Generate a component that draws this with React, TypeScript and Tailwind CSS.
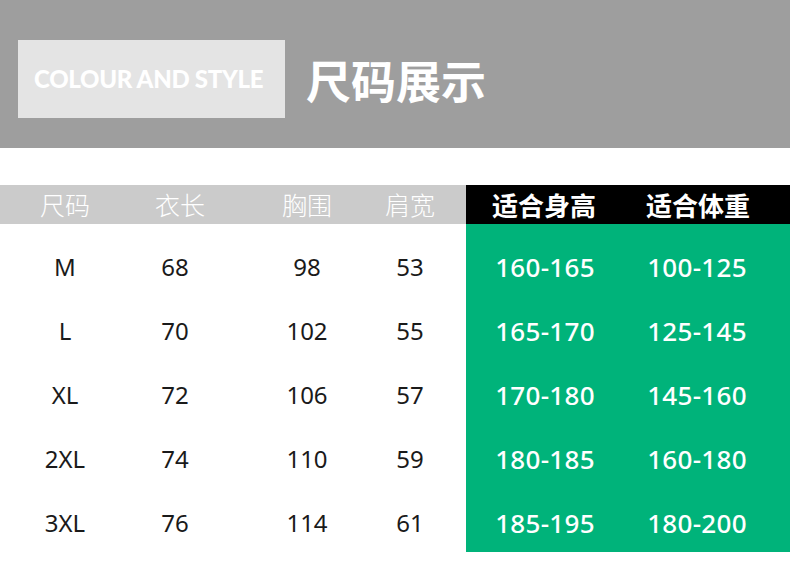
import React from "react";

const rows = [
  ["M", "68", "98", "53", "160-165", "100-125"],
  ["L", "70", "102", "55", "165-170", "125-145"],
  ["XL", "72", "106", "57", "170-180", "145-160"],
  ["2XL", "74", "110", "59", "180-185", "160-180"],
  ["3XL", "76", "114", "61", "185-195", "180-200"],
];

const leftCenters = [65, 175, 307, 410];
const rightCenters = [545, 697];

const font = { fontFamily: '"Noto Sans", "Noto Sans CJK SC", sans-serif' };

function Cell({ c, base, children, className }: { c: number; base: number; children: React.ReactNode; className: string }) {
  return (
    <div className={"absolute top-0 h-full flex items-center justify-center w-[160px] " + className} style={{ left: c - base - 80 }}>
      {children}
    </div>
  );
}

export default function App() {
  return (
    <div className="w-[790px] h-[573px] bg-white overflow-hidden font-['Noto_Sans','Noto_Sans_CJK_SC',sans-serif]">
      <div className="h-[148px] bg-[#9e9e9e] flex items-start pl-[18px] pt-[40px]">
        <div className="w-[267px] h-[78px] bg-[#e4e4e4] flex items-center pl-[16px]">
          <span className="text-white text-[24px] font-black tracking-[-0.3px] font-['Lato',sans-serif]">COLOUR AND STYLE</span>
        </div>
        <div className="ml-[21px] h-[78px] flex items-center text-white text-[45px] font-bold leading-none font-['Noto_Sans_CJK_SC',sans-serif]">尺码展示</div>
      </div>
      <div className="mt-[37px] flex">
        <div className="w-[466px]">
          <div className="h-[39px] bg-[#cbcbcb] relative text-white text-[25px] font-light font-['Noto_Sans_CJK_SC',sans-serif]">
            {["尺码", "衣长", "胸围", "肩宽"].map((t, i) => (
              <Cell key={t} c={[65, 180, 307, 410][i]} base={0} className="">{t}</Cell>
            ))}
          </div>
          <div className="pt-[11px]">
            {rows.map((r) => (
              <div key={r[0]} className="h-16 relative text-[24px] text-[#1a1a1a]" style={font}>
                {leftCenters.map((c, i) => (
                  <Cell key={i} c={c} base={0} className="">{r[i]}</Cell>
                ))}
              </div>
            ))}
          </div>
        </div>
        <div className="w-[324px]">
          <div className="h-[39px] bg-black relative text-white text-[26px] font-bold font-['Noto_Sans_CJK_SC',sans-serif]">
            {["适合身高", "适合体重"].map((t, i) => (
              <Cell key={t} c={[544, 698][i]} base={466} className="">{t}</Cell>
            ))}
          </div>
          <div className="h-[328px] bg-[#00b37a] pt-[11px] overflow-hidden">
            {rows.map((r) => (
              <div key={r[0]} className="h-16 relative text-[26px] text-white font-medium tracking-[0.3px]" style={font}>
                {rightCenters.map((c, i) => (
                  <Cell key={i} c={c} base={466} className="">{r[4 + i]}</Cell>
                ))}
              </div>
            ))}
          </div>
        </div>
      </div>
    </div>
  );
}
